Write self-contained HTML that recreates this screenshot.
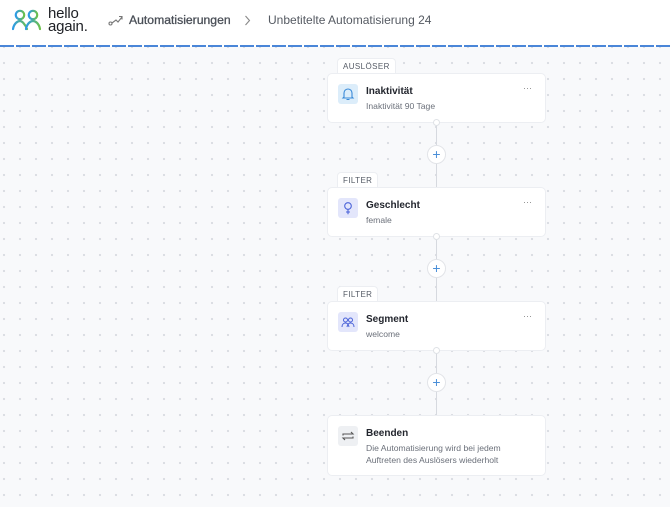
<!DOCTYPE html>
<html><head><meta charset="utf-8"><style>
*{margin:0;padding:0;box-sizing:border-box}
body{width:670px;height:507px;overflow:hidden;font-family:"Liberation Sans",sans-serif;background:#fff;position:relative}
.hdr{position:absolute;left:0;top:0;width:670px;height:46px;background:#fff}
.line{position:absolute;left:0;top:45px;width:670px;height:2px;background:repeating-linear-gradient(90deg,#4a86d8 0 14px,transparent 14px 16px)}
.canvas{position:absolute;left:0;top:47px;width:670px;height:460px;background-color:#f8f9fb;background-image:radial-gradient(circle,#d9dce2 1px,transparent 1.3px);background-size:16px 16px;background-position:-4px 8px}
.card{position:absolute;left:327px;width:219px;background:#fff;border:1px solid #eceef2;border-radius:5px}
.tab{position:absolute;left:337px;height:15px;background:#fff;border:1px solid #eceef2;border-bottom:none;border-radius:4px 4px 0 0;font-size:8px;letter-spacing:.4px;color:#555b66;padding:3px 5px 0}
.ico{position:absolute;left:10px;top:10px;width:20px;height:20px;border-radius:3px}
.t{position:absolute;left:38px;top:12px;font-size:10px;font-weight:bold;color:#23262e}
.s{position:absolute;left:38px;top:26px;font-size:8.6px;color:#6b707a;line-height:12px}
.dots{position:absolute;right:13px;top:9px;font-size:9px;color:#888;letter-spacing:0px}
.vl{position:absolute;left:436px;width:1px;background:#d6d9df}
.pc{position:absolute;left:427px;width:19px;height:19px;border-radius:50%;background:#fff;border:1px solid #e2e4e8;color:#4a8fd8;font-size:14px;line-height:16px;text-align:center}
.kn{position:absolute;left:433px;width:7px;height:7px;border-radius:50%;background:#fff;border:1px solid #dfe2e6}
</style></head><body>
<div class="hdr">
<svg style="position:absolute;left:12px;top:9px" width="30" height="22" viewBox="0 0 30 22"><defs><linearGradient id="g" x1="0" x2="1"><stop offset="0" stop-color="#2d9be8"/><stop offset="1" stop-color="#6cc04a"/></linearGradient></defs><g fill="none" stroke="url(#g)" stroke-width="2.2" stroke-linecap="round"><circle cx="8" cy="6" r="4.2"/><circle cx="21" cy="6" r="4.2"/><path d="M1 20c1-6 5-8 7-8s5 3 7 8"/><path d="M14 20c1-6 5-8 7-8s6 2 7 8"/></g></svg>
<div style="position:absolute;left:48px;top:7px;font-size:15px;line-height:13px;color:#1d1f24;letter-spacing:-.2px">hello<br>again.</div>
<svg style="position:absolute;left:108px;top:14px" width="15" height="12" viewBox="0 0 15 12"><g fill="none" stroke="#777" stroke-width="1.1"><circle cx="2.5" cy="9.5" r="1.5"/><path d="M4 9l4-3 2 2 4-5"/><path d="M11 2.5h3v3"/></g></svg>
<div style="position:absolute;left:129px;top:13px;font-size:12.2px;color:#4a4f57;-webkit-text-stroke:.3px #4a4f57">Automatisierungen</div>
<svg style="position:absolute;left:244px;top:15px" width="7" height="11" viewBox="0 0 7 11"><path d="M1.5 1l4 4.5-4 4.5" fill="none" stroke="#888" stroke-width="1.1"/></svg>
<div style="position:absolute;left:268px;top:13px;font-size:12px;color:#555a62">Unbetitelte Automatisierung 24</div>
</div>
<div class="line"></div>
<div class="canvas"></div>

<div class="vl" style="top:122px;height:65px"></div>
<div class="vl" style="top:236px;height:65px"></div>
<div class="vl" style="top:350px;height:65px"></div>

<div class="tab" style="top:58px">AUSLÖSER</div>
<div class="card" style="top:73px;height:50px">
<div class="ico" style="background:#dcedfa"><svg width="20" height="20" viewBox="0 0 20 20"><path d="M6 13V9a4 4 0 018 0v4l1 1H5z M8.5 15.5h3" fill="none" stroke="#3a8ad8" stroke-width="1.1"/></svg></div>
<div class="t">Inaktivität</div><div class="s">Inaktivität 90 Tage</div><div class="dots">···</div></div>
<div class="kn" style="top:119px"></div>
<div class="pc" style="top:145px">+</div>

<div class="tab" style="top:172px">FILTER</div>
<div class="card" style="top:187px;height:50px">
<div class="ico" style="background:#e3e6fb"><svg width="20" height="20" viewBox="0 0 20 20"><g fill="none" stroke="#4b63d8" stroke-width="1.1"><circle cx="10" cy="8" r="3.3"/><path d="M10 11.3v5M8 14h4"/></g></svg></div>
<div class="t">Geschlecht</div><div class="s">female</div><div class="dots">···</div></div>
<div class="kn" style="top:233px"></div>
<div class="pc" style="top:259px">+</div>

<div class="tab" style="top:286px">FILTER</div>
<div class="card" style="top:301px;height:50px">
<div class="ico" style="background:#e3e6fb"><svg width="20" height="20" viewBox="0 0 20 20"><g fill="none" stroke="#4b63d8" stroke-width="1"><circle cx="7.5" cy="8" r="2"/><circle cx="12.5" cy="8" r="2"/><path d="M4 15c0-3 2-4 3.5-4s3 1 3.5 4M9 15c.5-3 2-4 3.5-4s3.5 1 3.5 4"/></g></svg></div>
<div class="t">Segment</div><div class="s">welcome</div><div class="dots">···</div></div>
<div class="kn" style="top:347px"></div>
<div class="pc" style="top:373px">+</div>

<div class="card" style="top:415px;height:61px">
<div class="ico" style="background:#eef0f3"><svg width="20" height="20" viewBox="0 0 20 20"><g fill="none" stroke="#555" stroke-width="1.1"><path d="M5 9.5V8h10l-2-2M15 10.5V12H5l2 2"/></g></svg></div>
<div class="t">Beenden</div><div class="s">Die Automatisierung wird bei jedem<br>Auftreten des Auslösers wiederholt</div></div>
</body></html>
